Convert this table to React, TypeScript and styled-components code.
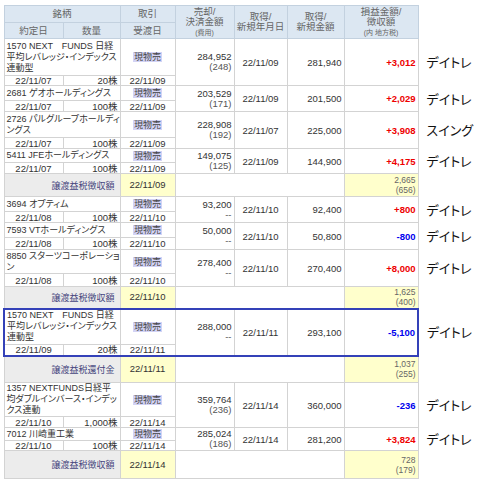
import React from "react";
import styled, { createGlobalStyle, css } from "styled-components";

type Trade = {
  name: string[];
  date: string;
  qty: string;
  settle: string;
  amount: string;
  fee: string;
  openDate: string;
  openAmount: string;
  pl: string;
  note: string;
  a: number;
  b: number;
  boxed?: boolean;
};

type Summary = {
  summary: true;
  label: string;
  date: string;
  tax: string;
  local: string;
  h: number;
};

const rows: (Trade | Summary)[] = [
  { name: ["1570 NEXT\u3000FUNDS 日経", "平均レバレッジ・インデックス", "連動型"], date: "22/11/07", qty: "20株", settle: "22/11/09", amount: "284,952", fee: "(248)", openDate: "22/11/09", openAmount: "281,940", pl: "+3,012", note: "デイトレ", a: 37, b: 10 },
  { name: ["2681 ゲオホールディングス"], date: "22/11/07", qty: "100株", settle: "22/11/09", amount: "203,529", fee: "(171)", openDate: "22/11/09", openAmount: "201,500", pl: "+2,029", note: "デイトレ", a: 15, b: 11 },
  { name: ["2726 パルグループホールディ", "ングス"], date: "22/11/07", qty: "100株", settle: "22/11/09", amount: "228,908", fee: "(192)", openDate: "22/11/07", openAmount: "225,000", pl: "+3,908", note: "スイング", a: 26, b: 11 },
  { name: ["5411 JFEホールディングス"], date: "22/11/07", qty: "100株", settle: "22/11/09", amount: "149,075", fee: "(125)", openDate: "22/11/09", openAmount: "144,900", pl: "+4,175", note: "デイトレ", a: 14, b: 11 },
  { summary: true, label: "譲渡益税徴収額", date: "22/11/09", tax: "2,665", local: "(656)", h: 23 },
  { name: ["3694 オプティム"], date: "22/11/08", qty: "100株", settle: "22/11/10", amount: "93,200", fee: "--", openDate: "22/11/10", openAmount: "92,400", pl: "+800", note: "デイトレ", a: 15, b: 11 },
  { name: ["7593 VTホールディングス"], date: "22/11/08", qty: "100株", settle: "22/11/10", amount: "50,000", fee: "--", openDate: "22/11/10", openAmount: "50,800", pl: "-800", note: "デイトレ", a: 15, b: 12 },
  { name: ["8850 スターツコーポレーショ", "ン"], date: "22/11/08", qty: "100株", settle: "22/11/10", amount: "278,400", fee: "--", openDate: "22/11/10", openAmount: "270,400", pl: "+8,000", note: "デイトレ", a: 24, b: 13 },
  { summary: true, label: "譲渡益税徴収額", date: "22/11/10", tax: "1,625", local: "(400)", h: 22 },
  { name: ["1570 NEXT\u3000FUNDS 日経", "平均レバレッジ・インデックス", "連動型"], date: "22/11/09", qty: "20株", settle: "22/11/11", amount: "288,000", fee: "--", openDate: "22/11/11", openAmount: "293,100", pl: "-5,100", note: "デイトレ", a: 36, b: 11, boxed: true },
  { summary: true, label: "譲渡益税還付金", date: "22/11/11", tax: "1,037", local: "(255)", h: 27 },
  { name: ["1357 NEXTFUNDS日経平", "均ダブルインバース・インデッ", "クス連動"], date: "22/11/10", qty: "1,000株", settle: "22/11/14", amount: "359,764", fee: "(236)", openDate: "22/11/14", openAmount: "360,000", pl: "-236", note: "デイトレ", a: 34, b: 11 },
  { name: ["7012 川崎重工業"], date: "22/11/10", qty: "100株", settle: "22/11/14", amount: "285,024", fee: "(186)", openDate: "22/11/14", openAmount: "281,200", pl: "+3,824", note: "デイトレ", a: 10, b: 10 },
  { summary: true, label: "譲渡益税徴収額", date: "22/11/14", tax: "728", local: "(179)", h: 28 },
];

const widths = [59, 57, 55, 59, 53, 57, 74, 60];

const GlobalStyle = createGlobalStyle`
  body {
    margin: 0;
    background: #fff;
    font-family: "Liberation Sans", "Noto Sans CJK JP", sans-serif;
  }
`;

const Page = styled.div`
  padding: 5px 0 0 3px;
`;

const Table = styled.table`
  border-collapse: collapse;
  table-layout: fixed;
  width: 474px;
  font-size: 9.5px;
  color: #333;
  font-feature-settings: "palt";
`;

const Col = styled.col<{ $w: number }>`
  width: ${p => p.$w}px;
`;

const Row = styled.tr<{ $h: number }>`
  height: ${p => p.$h}px;
`;

const Th = styled.th`
  background: #dce7f2;
  border: 1px solid #c3d1df;
  color: #666;
  font-weight: normal;
  line-height: 10px;
  padding: 0 2px;
  text-align: center;
  vertical-align: middle;
`;

const Tiny = styled.span`
  font-size: 7px;
`;

const BLUE = "2px solid #3441b8";

type Fit = "name" | "stack" | "date";

const Cell = styled.td<{ $align?: "left" | "center" | "right"; $fit?: Fit; $box?: string }>`
  border: 1px solid #d3d3d3;
  padding: 0 2px;
  line-height: ${p => (p.$fit === "date" ? "9px" : p.$fit === "stack" ? "10px" : "11px")};
  font-size: ${p => (p.$fit === "name" ? "9px" : "9.5px")};
  text-align: ${p => p.$align || "left"};
  vertical-align: middle;
  white-space: nowrap;
  overflow: hidden;
  ${p =>
    p.$box &&
    css`
      ${p.$box.includes("t") && `border-top: ${BLUE};`}
      ${p.$box.includes("b") && `border-bottom: ${BLUE};`}
      ${p.$box.includes("l") && `border-left: ${BLUE};`}
      ${p.$box.includes("r") && `border-right: ${BLUE};`}
    `}
`;

const LabelCell = styled.td`
  border: 1px solid #d3d3d3;
  background: #ececec;
  color: #44447c;
  font-size: 9px;
  text-align: right;
  padding: 0 5px;
  vertical-align: middle;
`;

const YellowCell = styled.td<{ $align: "center" | "right" }>`
  border: 1px solid #d3d3d3;
  background: #ffffcc;
  text-align: ${p => p.$align};
  padding: 0 2px;
  vertical-align: middle;
  line-height: 10px;
  color: ${p => (p.$align === "right" ? "#666" : "#333")};
  font-size: ${p => (p.$align === "right" ? "8.5px" : "9.5px")};
`;

const BlankCell = styled.td`
  border: 1px solid #d3d3d3;
`;

const NoteCell = styled.td`
  border: none;
  padding: 0 0 0 8px;
  font-size: 13px;
  line-height: 14px;
  color: #111;
  white-space: nowrap;
  vertical-align: middle;
  font-family: "Noto Sans CJK JP", sans-serif;
`;

const Kind = styled.span`
  background: #d3d3f5;
  color: #444;
  font-size: 9px;
  padding: 0 1px;
`;

const Fee = styled.span`
  color: #555;
`;

const Pl = styled.span<{ $neg: boolean }>`
  font-weight: bold;
  color: ${p => (p.$neg ? "#0000ee" : "#ee0000")};
`;

function TradeRows({ t }: { t: Trade }) {
  const bx = (s: string) => (t.boxed ? s : undefined);
  return (
    <>
      <Row $h={t.a}>
        <Cell colSpan={2} $fit="name" $box={bx("tl")}>
          {t.name.map((line, i) => (
            <React.Fragment key={i}>
              {i > 0 && <br />}
              {line}
            </React.Fragment>
          ))}
        </Cell>
        <Cell $align="center" $box={bx("t")}>
          <Kind>現物売</Kind>
        </Cell>
        <Cell rowSpan={2} $align="right" $fit="stack" $box={bx("tb")}>
          {t.amount}
          <br />
          <Fee>{t.fee}</Fee>
        </Cell>
        <Cell rowSpan={2} $align="center" $box={bx("tb")}>
          {t.openDate}
        </Cell>
        <Cell rowSpan={2} $align="right" $box={bx("tb")}>
          {t.openAmount}
        </Cell>
        <Cell rowSpan={2} $align="right" $box={bx("tbr")}>
          <Pl $neg={t.pl.startsWith("-")}>{t.pl}</Pl>
        </Cell>
        <NoteCell rowSpan={2}>{t.note}</NoteCell>
      </Row>
      <Row $h={t.b}>
        <Cell $align="center" $fit="date" $box={bx("lb")}>
          {t.date}
        </Cell>
        <Cell $align="right" $fit="date" $box={bx("b")}>
          {t.qty}
        </Cell>
        <Cell $align="center" $fit="date" $box={bx("b")}>
          {t.settle}
        </Cell>
      </Row>
    </>
  );
}

function SummaryRow({ s }: { s: Summary }) {
  return (
    <Row $h={s.h}>
      <LabelCell colSpan={2}>{s.label}</LabelCell>
      <YellowCell $align="center">{s.date}</YellowCell>
      <BlankCell colSpan={3} />
      <YellowCell $align="right">
        {s.tax}
        <br />
        {s.local}
      </YellowCell>
      <NoteCell />
    </Row>
  );
}

export default function App() {
  return (
    <Page>
      <GlobalStyle />
      <Table>
        <colgroup>
          {widths.map((w, i) => (
            <Col key={i} $w={w} />
          ))}
        </colgroup>
        <thead>
          <Row $h={17}>
            <Th colSpan={2}>銘柄</Th>
            <Th>取引</Th>
            <Th rowSpan={2}>
              売却/
              <br />
              決済金額
              <br />
              <Tiny>(費用)</Tiny>
            </Th>
            <Th rowSpan={2}>
              取得/
              <br />
              新規年月日
            </Th>
            <Th rowSpan={2}>
              取得/
              <br />
              新規金額
            </Th>
            <Th rowSpan={2}>
              損益金額/
              <br />
              徴収額
              <br />
              <Tiny>(内 地方税)</Tiny>
            </Th>
            <NoteCell rowSpan={2} />
          </Row>
          <Row $h={16}>
            <Th>約定日</Th>
            <Th>数量</Th>
            <Th>受渡日</Th>
          </Row>
        </thead>
        <tbody>
          {rows.map((r, i) =>
            "summary" in r ? <SummaryRow key={i} s={r} /> : <TradeRows key={i} t={r} />
          )}
        </tbody>
      </Table>
    </Page>
  );
}
